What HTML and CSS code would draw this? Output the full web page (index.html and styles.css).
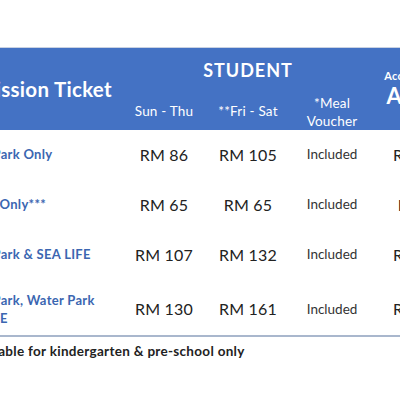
FILE: index.html
```html
<!DOCTYPE html>
<html lang="en">
<head>
  <meta charset="UTF-8">
  <meta name="viewport" content="width=device-width, initial-scale=1">
  <title>Ticket Prices</title>
  <link rel="stylesheet" href="styles.css">
</head>
<body>

  <div class="tabela">
    <table>
      <colgroup>
        <col class="c-nome">
        <col class="c-dia">
        <col class="c-dia">
        <col class="c-dia">
        <col class="c-adulto">
      </colgroup>
      <thead>
        <tr class="topo">
          <th rowspan="2" class="titulo">Admission Ticket</th>
          <th colspan="3" class="grupo">STUDENT</th>
          <th rowspan="2" class="adulto">
            <span class="pequeno">Accompanying</span>
            <span class="grande">ADULT</span>
          </th>
        </tr>
        <tr class="sub">
          <th>Sun - Thu</th>
          <th>**Fri - Sat</th>
          <th class="refeicao">*Meal<br>Voucher</th>
        </tr>
      </thead>
      <tbody>
        <tr>
          <td class="nome">LEGOLAND Park Only</td>
          <td class="preco">RM 86</td>
          <td class="preco">RM 105</td>
          <td class="incluso">Included</td>
          <td class="preco">RM 129</td>
        </tr>
        <tr>
          <td class="nome">Water Park® Only***</td>
          <td class="preco">RM 65</td>
          <td class="preco">RM 65</td>
          <td class="incluso">Included</td>
          <td class="preco">RM 75</td>
        </tr>
        <tr>
          <td class="nome">LEGOLAND Park &amp; SEA LIFE</td>
          <td class="preco">RM 107</td>
          <td class="preco">RM 132</td>
          <td class="incluso">Included</td>
          <td class="preco">RM 159</td>
        </tr>
        <tr class="ultima">
          <td class="nome">LEGOLAND Park, Water Park<br>&amp; the SEA LIFE</td>
          <td class="preco">RM 130</td>
          <td class="preco">RM 161</td>
          <td class="incluso">Included</td>
          <td class="preco">RM 195</td>
        </tr>
      </tbody>
    </table>

    <p class="nota">***Applicable for kindergarten &amp; pre-school only</p>
  </div>

</body>
</html>
```

FILE: styles.css
```css
body {
  margin: 0;
  padding: 0;
  background: #fff;
  font-family: 'Lato', 'Open Sans', sans-serif;
  color: #222;
}
.tabela {
  margin-top: 47px;
  overflow: hidden;
  width: 400px;
}
table {
  border-collapse: collapse;
  margin-left: -90px;
  table-layout: fixed;
  width: 560px;
}
.c-nome {
  width: 212px;
}
.c-dia {
  width: 84px;
}
.c-adulto {
  width: 96px;
}
thead tr.topo {
  border-top: 1px solid #c9d2e2;
}
th {
  background: #4472c4;
  color: #fff;
  padding: 0;
}
.topo {
  height: 44px;
}
.sub {
  height: 38px;
}
.titulo {
  text-align: left;
  padding-left: 42px;
  font-size: 20.5px;
  font-weight: bold;
  letter-spacing: 0.3px;
}
.grupo {
  font-size: 18px;
  font-weight: bold;
  letter-spacing: 1px;
}
.adulto {
  text-align: center;
  font-weight: bold;
}
.adulto span {
  display: block;
}
.pequeno {
  font-size: 11px;
  line-height: 14px;
  letter-spacing: 0.3px;
}
.grande {
  font-size: 22px;
  line-height: 26px;
}
.sub th {
  font-size: 13.5px;
  font-weight: normal;
  letter-spacing: 0.2px;
}
.sub .refeicao {
  line-height: 18px;
  font-size: 13.5px;
  padding-top: 2px;
}
tbody tr {
  height: 50px;
}
tbody tr.ultima {
  height: 56px;
  border-bottom: 2px solid #a9b7cd;
}
td {
  padding: 0 0 1px;
  vertical-align: middle;
  text-align: center;
}
.ultima td {
  padding: 3px 0 0;
}
.nome {
  text-align: left;
  padding-left: 7px;
  font-size: 13px;
  font-weight: bold;
  color: #3b66b1;
  line-height: 18px;
  letter-spacing: 0.3px;
}
.ultima .nome {
  padding-left: 7px;
}
.preco {
  font-size: 16px;
  color: #222;
  letter-spacing: 0.2px;
}
.incluso {
  font-size: 13.5px;
  color: #333;
}
.nota {
  margin: 6px 0 0 -59px;
  font-size: 13.5px;
  line-height: 16px;
  font-weight: bold;
  color: #222;
  white-space: nowrap;
  letter-spacing: 0.3px;
}
```
